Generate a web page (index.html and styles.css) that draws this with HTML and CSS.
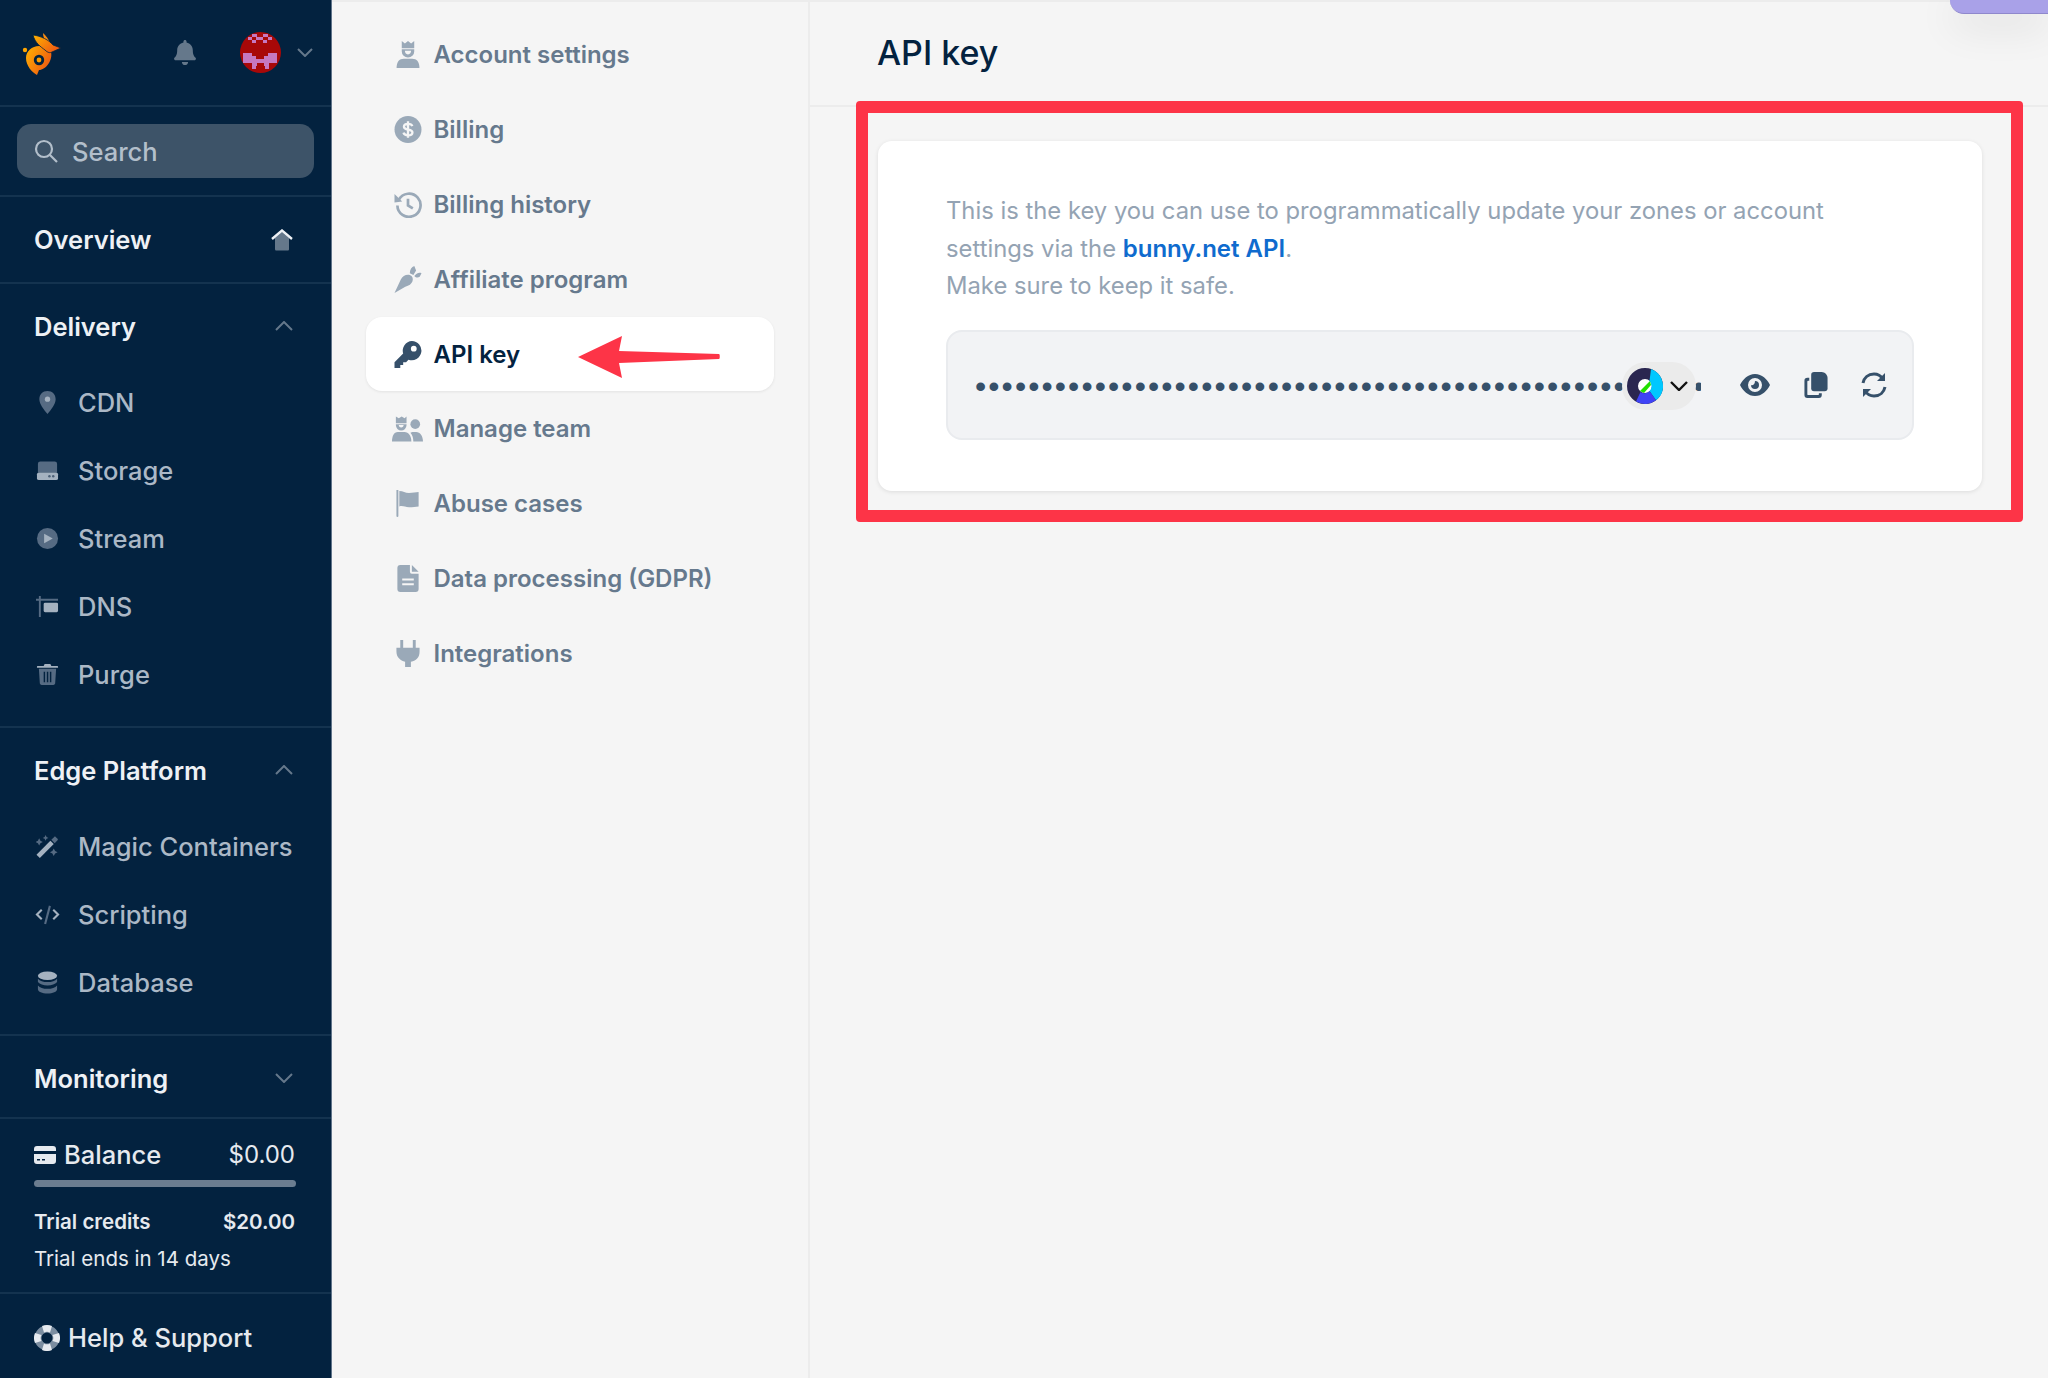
FILE: index.html
```html
<!DOCTYPE html>
<html lang="en">
<head>
    <meta charset="UTF-8">
    <meta name="viewport" content="width=device-width, initial-scale=1.0">
    <title>API key</title>
    <link rel="stylesheet" href="styles.css">
</head>
<body>

    <!-- Main sidebar -->
    <aside class="sidebar">
        <div class="side-top">
            <svg class="logo" viewBox="0 0 55 55">
                <defs>
                    <linearGradient id="bunny" x1="0" y1="0" x2="1" y2="0.6">
                        <stop offset="0" stop-color="#ffb400"/>
                        <stop offset="1" stop-color="#ef5a12"/>
                    </linearGradient>
                </defs>
                <circle cx="10" cy="25" r="2.200" fill="#ffa500"/>
                <path d="M11 33c0-7 6-12 13-12 3 0 5 1 8 4l4 2c2 8-5 18-12 18l-2 5c-5-3-11-9-11-17z" fill="url(#bunny)"/>
                <path d="M28 8c3 3 6 6 7 11l-4-2c-2-3-3-6-3-9z" fill="#f58a12"/>
                <path d="M18 10c8 1 16 5 20 10l8 3-9 4c-2 1-4 1-7-2-4-3-10-7-12-15z" fill="url(#bunny)" stroke="#03223f" stroke-width="0.8"/>
                <circle cx="24" cy="35" r="5.200" fill="#03223f"/>
                <circle cx="24" cy="35" r="2.400" fill="#ff9d00"/>
            </svg>
            <svg class="bell" viewBox="0 0 448 512"><path d="M224 512c35.32 0 63.97-28.65 63.97-64H160.03c0 35.35 28.65 64 63.97 64zm215.39-149.71c-19.32-20.76-55.47-51.99-55.47-154.29 0-77.7-54.48-139.9-127.94-155.16V32c0-17.67-14.32-32-31.98-32s-31.98 14.33-31.98 32v20.84C118.56 68.1 64.08 130.3 64.08 208c0 102.3-36.15 133.53-55.47 154.29-6 6.45-8.66 14.16-8.61 21.71.11 16.4 12.98 32 32.1 32h383.8c19.12 0 32-15.6 32.1-32 .05-7.55-2.61-15.27-8.61-21.71z"/></svg>
            <svg class="avatar" viewBox="0 0 41 41">
                <circle cx="20.500" cy="20.500" r="20.500" fill="#a80808"/>
                <g fill="#c678c0">
                    <rect x="12" y="2" width="5" height="3"/><rect x="23" y="2" width="5" height="3"/>
                    <rect x="8" y="5" width="4" height="3"/><rect x="16" y="5" width="7" height="3"/><rect x="28" y="5" width="4" height="3"/>
                    <rect x="12" y="8" width="4" height="3"/><rect x="23" y="8" width="4" height="3"/>
                    <rect x="3" y="21" width="9" height="3"/><rect x="28" y="21" width="9" height="3"/>
                    <rect x="3" y="24" width="13" height="3"/><rect x="24" y="24" width="13" height="3"/>
                    <rect x="3" y="27" width="34" height="4"/>
                    <rect x="12" y="31" width="5" height="3"/><rect x="24" y="31" width="5" height="3"/>
                    <rect x="12" y="34" width="4" height="3"/><rect x="25" y="34" width="4" height="3"/>
                </g>
            </svg>
            <svg class="chevron small" viewBox="0 0 16 9"><path d="M1 1l7 7 7-7"/></svg>
        </div>

        <div class="search-wrap">
            <div class="search">
                <svg class="search-icon" viewBox="0 0 24 24"><circle cx="10" cy="10" r="8"/><path d="M16 16l7 7"/></svg>
                <span>Search</span>
            </div>
        </div>

        <div class="side-head overview">
            <span>Overview</span>
            <svg class="home" viewBox="0 0 22 22"><path class="shade" d="M4 9l7-6 7 6v11c0 1-.5 1.500-1.500 1.500h-11c-1 0-1.500-.5-1.500-1.500z"/><path class="top" d="M1 10l10-8.500L21 10" /></svg>
        </div>

        <section class="side-section">
            <div class="side-head">
                <span>Delivery</span>
                <svg class="chevron" viewBox="0 0 18 10"><path d="M1 9l8-8 8 8"/></svg>
            </div>
            <a class="side-item">
                <svg viewBox="0 0 24 24"><path class="dim" fill-rule="evenodd" d="M12 0c5 0 8.500 3.500 8.500 8.500 0 5-4.500 10.500-8.500 15.500C8 19 3.500 13.500 3.500 8.500 3.500 3.500 7 0 12 0z"/><circle class="lit" cx="12" cy="8.500" r="2.800"/></svg>
                CDN
            </a>
            <a class="side-item">
                <svg viewBox="0 0 24 24"><path class="dim" d="M2 5a2.500 2.500 0 0 1 2.500-2.500h15A2.500 2.500 0 0 1 22 5v9H2z"/><path class="lit" d="M3 14h18a2 2 0 0 1 2 2v4a2 2 0 0 1-2 2H3a2 2 0 0 1-2-2v-4a2 2 0 0 1 2-2z"/><circle class="hole" cx="14" cy="18" r="1.300"/><circle class="hole" cx="18" cy="18" r="1.300"/></svg>
                Storage
            </a>
            <a class="side-item">
                <svg viewBox="0 0 24 24"><circle class="dim" cx="12" cy="12" r="11"/><path class="lit" d="M8.500 7l9 5-9 5z"/></svg>
                Stream
            </a>
            <a class="side-item">
                <svg viewBox="0 0 24 24"><path class="dim" d="M3 1h2v3h18v2H5v17H3V6H0V4h3z"/><rect class="lit" x="8" y="8" width="15" height="10" rx="1.500"/></svg>
                DNS
            </a>
            <a class="side-item">
                <svg viewBox="0 0 24 24"><path class="dim" d="M3 6h18l-1 15.500a2 2 0 0 1-2 1.500H6a2 2 0 0 1-2-1.500zm5 3v11h1.500V9zm3.300 0v11h1.500V9zm3.200 0v11H16V9z" fill-rule="evenodd"/><path class="lit" d="M9 1h6l1 2h6c.8 0 1 .5 1 1v1H1V4c0-.5.2-1 1-1h6z"/></svg>
                Purge
            </a>
        </section>

        <section class="side-section">
            <div class="side-head">
                <span>Edge Platform</span>
                <svg class="chevron" viewBox="0 0 18 10"><path d="M1 9l8-8 8 8"/></svg>
            </div>
            <a class="side-item">
                <svg viewBox="0 0 24 24"><path class="lit" d="M.5 20.500L15 6l3.500 3.500L4 24z"/><path class="dim" d="M16 5l3-3c.5-.5 1-.5 1.500 0l2 2c.5.5.5 1 0 1.500l-3 3z"/><path class="dim" d="M10 0l1 2 2 1-2 1-1 2-1-2-2-1 2-1zM3.300 3.500l1.300 2.500 2.500 1.300-2.500 1.200-1.300 2.500L2 8.500-.5 7.300 2 6zM18.500 14l1.400 2.600 2.600 1.400-2.600 1.400-1.400 2.600-1.400-2.600-2.600-1.400 2.600-1.400z"/></svg>
                Magic Containers
            </a>
            <a class="side-item">
                <svg class="code" viewBox="0 0 26 24"><path class="stroke-lit" d="M7 7l-5 5 5 5M19 7l5 5-5 5"/><path class="stroke-dim" d="M15.500 3l-5 19"/></svg>
                Scripting
            </a>
            <a class="side-item">
                <svg viewBox="0 0 24 24"><ellipse class="lit" cx="12" cy="5" rx="10" ry="4.500"/><path class="dim" d="M2 8c2 2.500 5.500 3.500 10 3.500S20 10.500 22 8v3.500c-2 2.500-5.500 3.500-10 3.500S4 14 2 11.500z"/><path class="dim" d="M2 15c2 2.500 5.500 3.500 10 3.500s8-1 10-3.500v4c0 2.500-4.500 4.500-10 4.500S2 21.500 2 19z"/></svg>
                Database
            </a>
        </section>

        <div class="side-head monitoring">
            <span>Monitoring</span>
            <svg class="chevron" viewBox="0 0 18 10"><path d="M1 1l8 8 8-8"/></svg>
        </div>

        <div class="balance">
            <div class="balance-row">
                <span class="balance-label">
                    <svg class="card-icon" viewBox="0 0 22 18"><path d="M3 0h16a3 3 0 0 1 3 3v2H0V3a3 3 0 0 1 3-3zM0 8h22v7a3 3 0 0 1-3 3H3a3 3 0 0 1-3-3zm3 5v1.500h3V13zm5 0v1.500h3V13z" fill-rule="evenodd"/></svg>
                    Balance
                </span>
                <span class="balance-amount">$0.00</span>
            </div>
            <div class="balance-bar"></div>
            <div class="trial-row"><span>Trial credits</span><span>$20.00</span></div>
            <div class="trial-ends">Trial ends in 14 days</div>
        </div>

        <div class="help">
            <svg viewBox="0 0 26 26"><circle cx="13" cy="13" r="9" fill="none" stroke="#7b8da0" stroke-width="7"/><path d="M13 0a13 13 0 0 1 5 1l-2 6.500a6 6 0 0 0-6 0L8 1a13 13 0 0 1 5-1zM25 8a13 13 0 0 1 0 10l-6.500-2a6 6 0 0 0 0-6zM1 8l6.500 2a6 6 0 0 0 0 6L1 18A13 13 0 0 1 1 8zM10 18.500a6 6 0 0 0 6 0l2 6.500a13 13 0 0 1-10 0z" fill="#e6eaef"/></svg>
            Help &amp; Support
        </div>
    </aside>

    <!-- Settings menu -->
    <nav class="subnav">
        <a class="sub-item">
            <svg viewBox="0 0 26 26"><path class="sub-dark" d="M7 0l3 2.500L13 0l3 2.500L19 0v7H7z"/><path class="sub-dark" d="M7 8h12v2a6 6 0 0 1-12 0zm3 1.500c0 1.500 1 3.500 3 3.500s3-2 3-3.500z" fill-rule="evenodd"/><path class="sub-dark" d="M9 17h8c4.500 0 7 3 7 9H2c0-6 2.500-9 7-9z"/></svg>
            Account settings
        </a>
        <a class="sub-item">
            <svg viewBox="0 0 28 28"><circle class="sub-dark" cx="14" cy="14" r="14"/><path class="sub-cut" d="M18.500 10.500c-.5-1.500-2-2.300-4.500-2.300s-4.200 1-4.200 3c0 4.300 8.800 1.800 8.800 5.800 0 2-1.700 3-4.600 3-2.500 0-4.200-1-4.700-2.700M14 5.500v17"/></svg>
            Billing
        </a>
        <a class="sub-item">
            <svg viewBox="0 0 28 28"><path class="sub-line" d="M4.500 9a12 12 0 1 1-1.500 6"/><path class="sub-dark" d="M0 3l8 8-8 1z"/><path class="sub-line" d="M14 8v7l5 3"/></svg>
            Billing history
        </a>
        <a class="sub-item">
            <svg viewBox="0 0 30 30"><path class="sub-dark" d="M0 30l7-15c2-4 6-6 10-5 3 1 4 4 3 7-1 3-4 5-8 6z"/><path class="sub-dark" d="M17 8c0-4 2-7 5-8l2 5-3 5zM22 11c3-3 5-4 8-3l-2 4c-2 1-4 1-6-1z"/></svg>
            Affiliate program
        </a>
        <a class="sub-item active">
            <svg viewBox="0 0 28 28"><path class="key" fill-rule="evenodd" d="M18 0a10 10 0 1 1-3.500 19.400L12 22H9v3H6v3H0v-6l9-9a10 10 0 0 1 9-13zm2 5a3 3 0 1 0 0 6 3 3 0 0 0 0-6z"/></svg>
            API key
        </a>
        <a class="sub-item">
            <svg class="wide" viewBox="0 0 32 27"><path class="sub-dark" d="M4 1l3 2 3-2 3 2 2-2v7H4z"/><path class="sub-dark" fill-rule="evenodd" d="M4 9h11v1a5.500 5.500 0 0 1-11 0zm3 1c0 1.500 1 2.500 2.500 2.500S12 11.500 12 10z"/><path class="sub-dark" d="M6 17h7c4 0 7 4 7 10H0c0-6 2-10 6-10z"/><circle class="sub-dark" cx="24" cy="9" r="5"/><path class="sub-dark" d="M21 17h4c4 0 7 4 7 10H22c0-4-1-7-3-9z"/></svg>
            Manage team
        </a>
        <a class="sub-item">
            <svg viewBox="0 0 26 28"><path class="sub-dark" d="M1 0h2v27a1 1 0 0 1-2 0z"/><path class="sub-dark" d="M4 1c4 0 6 2 10 2 4 0 7-1 10-1v15c-3 0-6 1-10 1-4 0-6-2-10-1z"/></svg>
            Abuse cases
        </a>
        <a class="sub-item">
            <svg viewBox="0 0 22 28"><path class="sub-dark" fill-rule="evenodd" d="M3 0h10v7a2 2 0 0 0 2 2h7v16a3 3 0 0 1-3 3H3a3 3 0 0 1-3-3V3a3 3 0 0 1 3-3zm2 14v2h12v-2zm0 5v2h12v-2z"/><path class="sub-dark" d="M15 0l7 7h-7z"/></svg>
            Data processing (GDPR)
        </a>
        <a class="sub-item">
            <svg viewBox="0 0 24 28"><path class="sub-dark" d="M4 0h3v8h10V0h3v8h4v4c0 6-3 9.500-9 10.500V28h-6v-5.500C4 21.500 0 18 0 12V8h4z"/></svg>
            Integrations
        </a>
    </nav>

    <!-- Page content -->
    <main class="content">
        <header class="page-head">
            <h1>API key</h1>
        </header>

        <div class="panel">
            <div class="panel-line">This is the key you can use to programmatically update your zones or account</div>
            <div class="panel-line">settings via the <a class="api-link">bunny.net API</a>.</div>
            <div class="panel-line">Make sure to keep it safe.</div>
            <div class="key-box">
                <input class="key-input" type="password" readonly value="bunnynetapikeybunnynetapikeybunnynetapikeybunnynetapikeybunnynetapikey">
                <div class="key-actions">
                    <svg class="eye" viewBox="0 0 30 22"><path fill-rule="evenodd" d="M15 0c7 0 12 5 15 11-3 6-8 11-15 11S3 17 0 11C3 5 8 0 15 0zm0 4a7 7 0 1 0 0 14 7 7 0 0 0 0-14zm0 3a4 4 0 1 1-4 4c1 1 4 0 4-4z"/></svg>
                    <svg class="copy" viewBox="0 0 24 27"><path d="M10 0h8c3 0 6 3 6 6v11c0 2-1 3-3 3H10c-2 0-3-1-3-3V3c0-2 1-3 3-3z"/><path d="M0 9c0-2 1-3 3-3h2v3H4c-.5 0-1 .5-1 1v13c0 .5.5 1 1 1h10c.5 0 1-.5 1-1v-1h3v2c0 2-1 3-3 3H3c-2 0-3-1-3-3z"/></svg>
                    <svg class="refresh" viewBox="0 0 26 26"><path d="M2 11C3 6 7 2 13 2c4 0 7 2 9 5M24 15c-1 5-5 9-11 9-4 0-7-2-9-5"/><path class="arrow-head" d="M24 1v8h-8zM2 25v-8h8z"/></svg>
                </div>
                <div class="ext-badge">
                    <svg viewBox="0 0 36 36">
                        <circle cx="18" cy="18" r="8" fill="#fff"/>
                        <circle cx="18" cy="18" r="12.500" fill="none" stroke="#2a2650" stroke-width="11"/>
                        <path d="M24 1A18 18 0 0 1 29 32.200L22.500 23a7 7 0 0 0 0-10z" fill="#00c8ff"/>
                        <path d="M29 32.200A18 18 0 0 1 9 33.500L13.500 24a7 7 0 0 0 9-1z" fill="#3f42f5"/>
                        <path d="M23 13L13 23l4 2 7-8z" fill="#22e000"/>
                    </svg>
                    <svg class="ext-chevron" viewBox="0 0 18 10"><path d="M1 1l8 8 8-8"/></svg>
                </div>
            </div>
        </div>
    </main>

    <!-- Annotations on top of the screenshot -->
    <div class="mark-box"></div>
    <svg class="mark-arrow" viewBox="0 0 142 44"><path d="M0 22L44 1l-3 15 100 3c1 0 1 5 0 5L41 28l3 15z"/></svg>
    <div class="purple-tab"></div>

</body>
</html>
```

FILE: styles.css
```css
* {
    box-sizing: border-box;
}

body {
    margin: 0;
    height: 1378px;
    display: flex;
    overflow: hidden;
    position: relative;
    background-color: #f5f5f5;
    font-family: 'Inter', sans-serif;
}

/* Main sidebar */
.sidebar {
    width: 332px;
    height: 1378px;
    flex-shrink: 0;
    background-color: #03223f;
    border-right: 1px solid #60748a;
    display: flex;
    flex-direction: column;
}

.side-top {
    height: 107px;
    flex-shrink: 0;
    border-bottom: 2px solid #14334f;
    display: flex;
    align-items: center;
    padding-left: 15px;
}

.logo {
    width: 55px;
    height: 55px;
}

.bell {
    width: 22px;
    height: 25px;
    fill: #65788b;
    margin-left: 104px;
}

.avatar {
    width: 41px;
    height: 41px;
    margin-left: 44px;
}

.chevron {
    width: 18px;
    height: 10px;
    fill: none;
    stroke: #65788b;
    stroke-width: 2;
}

.chevron.small {
    width: 16px;
    height: 9px;
    margin-left: 16px;
}

.search-wrap {
    height: 90px;
    flex-shrink: 0;
    padding: 17px 17px 0;
    border-bottom: 2px solid #14334f;
}

.search {
    height: 54px;
    border-radius: 14px;
    background-color: #3d5368;
    display: flex;
    align-items: center;
    padding-left: 17px;
    color: #b3bfcb;
    font-size: 25.5px;
    font-weight: 500;
}

.search-icon {
    width: 24px;
    height: 24px;
    margin-right: 14px;
    fill: none;
    stroke: #b3bfcb;
    stroke-width: 2.2;
}

.side-head {
    height: 84.5px;
    flex-shrink: 0;
    display: flex;
    align-items: center;
    justify-content: space-between;
    padding: 0 38px 0 34px;
    color: #eef1f5;
    font-size: 25.5px;
    font-weight: 600;
}

.overview {
    height: 87px;
    border-bottom: 2px solid #14334f;
}

.home {
    width: 22px;
    height: 22px;
}

.home .shade {
    fill: #65788b;
}

.home .top {
    fill: none;
    stroke: #eef1f5;
    stroke-width: 2.4;
}

.side-section {
    flex-shrink: 0;
    padding-bottom: 17.5px;
    border-bottom: 2px solid #14334f;
}

.side-item {
    height: 68px;
    display: flex;
    align-items: center;
    padding-left: 36px;
    color: #abb8c6;
    font-size: 25.5px;
    font-weight: 500;
}

.side-item svg {
    width: 23px;
    height: 23px;
    margin-right: 19px;
}

.side-item svg.code {
    width: 25px;
    margin-left: -1px;
    margin-right: 18px;
}

.dim {
    fill: #566b83;
}

.lit {
    fill: #a5b2c0;
}

.hole {
    fill: #4c6077;
}

.stroke-lit,
.stroke-dim {
    fill: none;
    stroke-width: 2.2;
}

.stroke-lit {
    stroke: #a5b2c0;
}

.stroke-dim {
    stroke: #566b83;
}

.monitoring {
    height: 83px;
    padding-top: 3px;
    border-bottom: 2px solid #14334f;
}

.balance {
    height: 175px;
    flex-shrink: 0;
    padding: 20px 36px 0 34px;
    border-bottom: 2px solid #14334f;
    color: #e6eaef;
}

.balance-row,
.trial-row {
    display: flex;
    justify-content: space-between;
    align-items: center;
}

.balance-row {
    font-size: 25.5px;
    font-weight: 500;
}

.balance-amount {
    font-size: 24px;
    font-weight: 400;
}

.balance-label {
    display: flex;
    align-items: center;
}

.card-icon {
    width: 22px;
    height: 18px;
    margin-right: 8px;
    fill: #e6eaef;
}

.balance-bar {
    height: 7px;
    margin-top: 10px;
    margin-right: -1px;
    border-radius: 4px;
    background-color: #6b7d90;
}

.trial-row {
    margin-top: 22px;
    font-size: 20.5px;
    font-weight: 600;
}

.trial-ends {
    margin-top: 12px;
    font-size: 20.5px;
}

.help {
    flex: 1;
    display: flex;
    align-items: center;
    padding-left: 34px;
    padding-top: 3px;
    color: #e6eaef;
    font-size: 25.5px;
    font-weight: 500;
}

.help svg {
    width: 26px;
    height: 26px;
    margin-right: 8px;
}

/* Settings menu */
.subnav {
    width: 478px;
    flex-shrink: 0;
    padding: 15px 34px 0;
    border-top: 2px solid #ececec;
    border-right: 2px solid #ececec;
}

.sub-item {
    height: 74.9px;
    display: flex;
    align-items: center;
    padding-left: 28px;
    color: #66798d;
    font-size: 24px;
    font-weight: 600;
}

.sub-item svg {
    width: 28px;
    height: 27px;
    margin-right: 11.5px;
    flex-shrink: 0;
}

.sub-item svg.wide {
    width: 31px;
    margin-left: -2px;
    margin-right: 10.5px;
}

.sub-dark {
    fill: #9aa9b8;
}

.sub-cut {
    fill: none;
    stroke: #f5f5f5;
    stroke-width: 2.4;
}

.sub-line {
    fill: none;
    stroke: #9aa9b8;
    stroke-width: 2.8;
}

.sub-item.active {
    background-color: #fff;
    border-radius: 16px;
    color: #03223f;
    box-shadow: 0 1px 3px rgba(0, 0, 0, 0.08);
}

.key {
    fill: #36506a;
}

/* Page content */
.content {
    flex: 1;
    border-top: 2px solid #ececec;
}

.page-head {
    height: 105px;
    display: flex;
    align-items: center;
    padding: 0 0 3px 67px;
    border-bottom: 2px solid #ececec;
}

h1 {
    margin: 0;
    color: #03223f;
    font-size: 34px;
    font-weight: 500;
}

.panel {
    width: 1104px;
    height: 350px;
    margin: 34px 0 0 68px;
    padding: 51px 68px 0;
    background-color: #fff;
    border-radius: 14px;
    box-shadow: 0 1px 4px rgba(0, 0, 0, 0.1);
}

.panel-line {
    color: #94a3b3;
    font-size: 23.8px;
    line-height: 37.5px;
}

.api-link {
    color: #0f6bce;
    font-size: 24px;
    font-weight: 600;
}

.key-box {
    position: relative;
    height: 110px;
    margin-top: 25px;
    padding-left: 27px;
    display: flex;
    align-items: center;
    background-color: #f2f3f5;
    border: 2px solid #e9ebee;
    border-radius: 16px;
}

/* masked key, browser draws the dots */
.key-input {
    width: 726px;
    margin-top: 2px;
    padding: 0;
    border: none;
    outline: none;
    background: none;
    color: #36506a;
    font-family: 'Liberation Sans', sans-serif;
    font-size: 32px;
    line-height: 34px;
    letter-spacing: 2.1px;
}

.key-actions {
    display: flex;
    align-items: center;
    margin-left: 39px;
}

.key-actions svg {
    width: 30px;
    height: 26px;
    fill: #36506a;
}

.key-actions .eye {
    margin-right: 31px;
}

.key-actions .copy {
    margin-right: 28px;
}

.key-actions .refresh {
    fill: none;
    stroke: #36506a;
    stroke-width: 3;
}

.refresh .arrow-head {
    fill: #36506a;
    stroke: none;
}

/* browser extension icon sitting over the field */
.ext-badge {
    position: absolute;
    left: 674px;
    top: 30px;
    width: 74px;
    height: 48px;
    padding-left: 5px;
    border-radius: 24px;
    background-color: #ebebeb;
    display: flex;
    align-items: center;
}

.ext-badge svg {
    width: 36px;
    height: 36px;
}

.ext-badge .ext-chevron {
    width: 18px;
    height: 10px;
    margin-left: 7px;
    fill: none;
    stroke: #111;
    stroke-width: 2.4;
}

/* Annotations */
.mark-box {
    position: absolute;
    left: 856px;
    top: 101px;
    width: 1167px;
    height: 421px;
    border: 12px solid #fd3447;
    border-radius: 4px;
}

.mark-arrow {
    position: absolute;
    left: 578px;
    top: 335px;
    width: 142px;
    height: 44px;
    fill: #fd3447;
}

.purple-tab {
    position: absolute;
    right: 0;
    top: 0;
    width: 98px;
    height: 14px;
    background-color: #a9a1e8;
    border-bottom: 1px solid #8f88cc;
    border-bottom-left-radius: 18px;
    box-shadow: 0 10px 40px rgba(0, 0, 0, 0.14);
}
```
